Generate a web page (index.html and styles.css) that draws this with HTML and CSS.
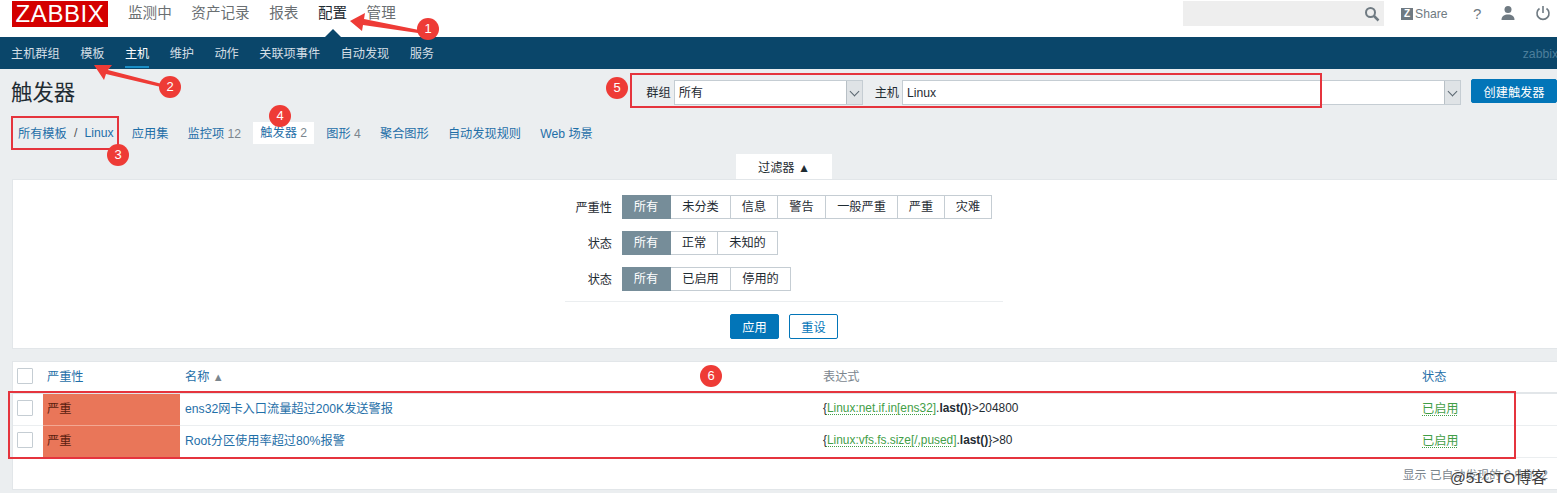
FILE: index.html
```html
<!DOCTYPE html>
<html lang="zh">
<head>
    <meta charset="UTF-8">
    <meta name="viewport" content="width=device-width, initial-scale=1.0">
    <title>触发器</title>
    <link rel="stylesheet" href="styles.css">
</head>
<body>

    <!-- 顶部菜单 -->
    <header class="top-bar">
        <div class="logo">ZABBIX</div>
        <nav class="top-menu">
            <a>监测中</a>
            <a>资产记录</a>
            <a>报表</a>
            <a class="active">配置</a>
            <a>管理</a>
        </nav>
        <div class="top-tools">
            <div class="search">
                <svg width="16" height="16" viewBox="0 0 16 16"><circle cx="6.5" cy="6.5" r="4.5" fill="none" stroke="#6f7a82" stroke-width="2"/><path d="M10 10l4.500 4.500" stroke="#6f7a82" stroke-width="2.500"/></svg>
            </div>
            <div class="share"><span class="share-z">Z</span>Share</div>
            <span class="help">?</span>
            <svg class="user" width="16" height="16" viewBox="0 0 16 16"><circle cx="8" cy="4.500" r="3.500" fill="#6f7a82"/><path d="M1.500 15c0-4 3-5.500 6.500-5.500s6.500 1.500 6.500 5.500z" fill="#6f7a82"/></svg>
            <svg class="power" width="16" height="16" viewBox="0 0 16 16"><path d="M4.500 3.500a6 6 0 1 0 7 0" fill="none" stroke="#6f7a82" stroke-width="1.600"/><path d="M8 1v7" stroke="#6f7a82" stroke-width="1.600"/></svg>
        </div>
    </header>

    <nav class="sub-nav">
        <a>主机群组</a>
        <a>模板</a>
        <a class="active">主机</a>
        <a>维护</a>
        <a>动作</a>
        <a>关联项事件</a>
        <a>自动发现</a>
        <a>服务</a>
        <span class="sub-user">zabbix</span>
    </nav>

    <main class="content">
        <div class="page-head">
            <h1>触发器</h1>
            <div class="head-controls">
                <label>群组</label>
                <div class="select group-select"><span>所有</span><i class="select-arrow"></i></div>
                <label>主机</label>
                <div class="select host-select"><span>Linux</span><i class="select-arrow"></i></div>
                <button class="btn-primary create-btn">创建触发器</button>
            </div>
        </div>

        <div class="breadcrumbs">
            <a class="crumb-first">所有模板</a><span class="crumb-sep">/</span><a class="crumb-host">Linux</a>
            <a>应用集</a>
            <a>监控项 <em>12</em></a>
            <a class="current">触发器 <em>2</em></a>
            <a>图形 <em>4</em></a>
            <a>聚合图形</a>
            <a>自动发现规则</a>
            <a>Web 场景</a>
        </div>

        <div class="filter-tab-row"><div class="filter-tab">过滤器 ▲</div></div>

        <section class="filter-box">
            <div class="filter-form">
                <div class="filter-row">
                    <label>严重性</label>
                    <div class="radio-group">
                        <span class="on w49">所有</span><span class="w60">未分类</span><span class="w47">信息</span><span class="w48">警告</span><span class="w72">一般严重</span><span class="w47">严重</span><span class="w47">灾难</span>
                    </div>
                </div>
                <div class="filter-row">
                    <label>状态</label>
                    <div class="radio-group">
                        <span class="on w49">所有</span><span class="w47">正常</span><span class="w60">未知的</span>
                    </div>
                </div>
                <div class="filter-row">
                    <label>状态</label>
                    <div class="radio-group">
                        <span class="on w49">所有</span><span class="w60">已启用</span><span class="w60">停用的</span>
                    </div>
                </div>
                <div class="filter-actions">
                    <button class="btn-primary">应用</button>
                    <button class="btn-outline">重设</button>
                </div>
            </div>
        </section>

        <section class="list-box">
            <table class="trigger-table">
                <colgroup>
                    <col class="col-check"><col class="col-severity"><col class="col-name"><col class="col-expr"><col>
                </colgroup>
                <thead>
                    <tr>
                        <th><i class="check"></i></th>
                        <th class="link">严重性</th>
                        <th class="link">名称 <b class="sort">▲</b></th>
                        <th class="expr">表达式</th>
                        <th class="link">状态</th>
                    </tr>
                </thead>
                <tbody>
                    <tr>
                        <td><i class="check"></i></td>
                        <td class="sev-high">严重</td>
                        <td class="link">ens32网卡入口流量超过200K发送警报</td>
                        <td class="expr">{<u>Linux:net.if.in[ens32]</u>.<strong>last()</strong>}&gt;204800</td>
                        <td class="status"><u>已启用</u></td>
                    </tr>
                    <tr>
                        <td><i class="check"></i></td>
                        <td class="sev-high">严重</td>
                        <td class="link">Root分区使用率超过80%报警</td>
                        <td class="expr">{<u>Linux:vfs.fs.size[/,pused]</u>.<strong>last()</strong>}&gt;80</td>
                        <td class="status"><u>已启用</u></td>
                    </tr>
                </tbody>
            </table>
            <div class="list-foot">显示 已自动发现的 2 中的 2</div>
        </section>
    </main>

    <!-- 截图上的标注 -->
    <div class="mark-box box-crumbs"></div>
    <div class="mark-box box-controls"></div>
    <div class="mark-box box-rows"></div>
    <svg class="arrows" width="1557" height="493" viewBox="0 0 1557 493">
        <path d="M350 21l15-8-1 6 55 11-1 3-55-8-1 6z" fill="#ee3b36"/>
        <path d="M94 65l18 0-4 5 54 14-1 3-55-13-2 6z" fill="#ee3b36"/>
    </svg>
    <span class="mark-num n1">1</span>
    <span class="mark-num n2">2</span>
    <span class="mark-num n3">3</span>
    <span class="mark-num n4">4</span>
    <span class="mark-num n5">5</span>
    <span class="mark-num n6">6</span>
    <div class="watermark">@51CTO博客</div>

</body>
</html>
```

FILE: styles.css
```css
* {
    box-sizing: border-box;
}

html, body {
    height: 493px;
    overflow: hidden;
}

body {
    margin: 0;
    position: relative;
    background: #ebeef0;
    font-family: "Liberation Sans", "Noto Sans CJK SC", sans-serif;
    font-size: 12.2px;
    color: #1f2c33;
}

a {
    color: #1f6fa8;
}

/* 顶部菜单 */
.top-bar {
    height: 37px;
    background: #fff;
    display: flex;
    padding: 1px 0 0 12px;
}

.logo {
    width: 96px;
    height: 26px;
    background: #d40000;
    color: #fff;
    font-size: 24px;
    line-height: 26px;
    text-align: center;
    letter-spacing: 0.6px;
}

.top-menu {
    display: flex;
    gap: 19.500px;
    margin-left: 20px;
    font-size: 14.600px;
    line-height: 25px;
}

.top-menu a {
    color: #6a6f72;
}

.top-menu a.active {
    color: #1f2c33;
    position: relative;
    height: 36px;
}

.top-menu a.active::after {
    content: "";
    position: absolute;
    left: 7px;
    bottom: 0;
    border: 8px solid transparent;
    border-top: 0;
    border-bottom-color: #0a466a;
}

.top-tools {
    margin-left: auto;
    display: flex;
    align-items: flex-start;
    color: #6f7a82;
}

.search {
    width: 201px;
    height: 25px;
    background: #eee;
    display: flex;
    align-items: center;
    justify-content: flex-end;
    padding-right: 4px;
}

.share {
    width: 72px;
    margin-left: 17px;
    display: flex;
    align-items: center;
    height: 25px;
    gap: 2px;
}

.share-z {
    width: 12px;
    height: 12px;
    background: #6f7a82;
    color: #fff;
    font-size: 10px;
    font-weight: bold;
    line-height: 12px;
    text-align: center;
}

.help {
    width: 27px;
    font-size: 15px;
    line-height: 25px;
}

.user {
    margin: 4px 19px 0 0;
}

.power {
    margin: 4px 6px 0 0;
}

/* 二级菜单 */
.sub-nav {
    height: 32px;
    background: #0a466a;
    display: flex;
    gap: 20.400px;
    padding: 0 0 0 11px;
    line-height: 34px;
}

.sub-nav a {
    color: #d4dee5;
}

.sub-nav a.active {
    color: #fff;
    height: 31px;
    border-bottom: 2px solid #1a8fc7;
}

.sub-user {
    margin-left: auto;
    color: #4d7f9c;
    margin-right: -1px;
}

/* 标题行 */
.page-head {
    height: 46px;
    display: flex;
    justify-content: space-between;
    padding-left: 11px;
}

h1 {
    margin: 7px 0 0;
    font-size: 21.400px;
    font-weight: normal;
    line-height: 34px;
}

.head-controls {
    display: flex;
    align-items: flex-start;
    padding-top: 11px;
    line-height: 24px;
}

.head-controls label {
    line-height: 26px;
}

.select {
    height: 25px;
    background: #fff;
    border: 1px solid #c5cdd3;
    display: flex;
    justify-content: space-between;
    padding-left: 4px;
    margin-left: 3px;
}

.group-select {
    width: 189px;
    margin-right: 12px;
}

.host-select {
    width: 559px;
    margin-right: 10px;
}

.select-arrow {
    width: 16px;
    background: #dfe3e6;
    border-left: 1px solid #b8c0c6;
    position: relative;
}

.select-arrow::after {
    content: "";
    position: absolute;
    left: 4px;
    top: 7px;
    width: 6px;
    height: 6px;
    border: solid #5a6670;
    border-width: 0 1px 1px 0;
    transform: rotate(45deg);
}

button {
    font: inherit;
    border-radius: 2px;
    cursor: pointer;
}

.btn-primary {
    background: #0275b8;
    color: #fff;
    border: 1px solid #0275b8;
}

.btn-outline {
    background: #fff;
    color: #0275b8;
    border: 1px solid #0275b8;
}

.create-btn {
    width: 86px;
    height: 24px;
    margin-top: -1px;
}

/* 二级页签 */
.breadcrumbs {
    height: 35px;
    display: flex;
    align-items: center;
    gap: 19.200px;
    padding: 0 0 0 18px;
}

.breadcrumbs em {
    font-style: normal;
    color: #7b868e;
}

.breadcrumbs .current {
    background: #fff;
    height: 22px;
    line-height: 22px;
    padding: 0 7px;
    margin: 0 -7px;
}

.crumb-first {
    margin-right: -12px;
}

.crumb-sep {
    color: #555;
    margin-right: -12px;
}

.crumb-host {
    margin-right: -1px;
}

.filter-tab-row {
    display: flex;
    justify-content: center;
    height: 25px;
    margin-top: 4px;
    padding-left: 11px;
}

.filter-tab {
    width: 96px;
    height: 25px;
    background: #fff;
    text-align: center;
    line-height: 28px;
}

/* 过滤器 */
.filter-box {
    height: 170px;
    margin-left: 12px;
    padding-right: 2px;
    background: #fff;
    border: 1px solid #e2e6e9;
    border-right: 0;
}

.filter-form {
    width: 438px;
    margin: 15px auto 0;
    display: flex;
    flex-direction: column;
    gap: 12px;
}

.filter-row {
    display: flex;
    align-items: center;
    gap: 10px;
    height: 24px;
}

.filter-row label {
    width: 47px;
    text-align: right;
}

.radio-group {
    display: flex;
}

.radio-group span {
    height: 24px;
    line-height: 23px;
    text-align: center;
    background: #fff;
    border: 1px solid #c5cdd3;
    border-left: 0;
}

.radio-group span.on {
    background: #768d99;
    color: #fff;
    border-color: #768d99;
}

.w47 { width: 47px; }
.w48 { width: 48px; }
.w49 { width: 49px; }
.w60 { width: 60px; }
.w72 { width: 72px; }

.filter-actions {
    border-top: 1px solid #ebeef0;
    padding-top: 12px;
    margin-top: -2px;
    display: flex;
    justify-content: center;
    gap: 10px;
}

.filter-actions button {
    width: 49px;
    height: 25px;
}

/* 列表 */
.list-box {
    height: 129px;
    margin: 12px 0 0 12px;
    background: #fff;
    border: 1px solid #e2e6e9;
    border-right: 0;
}

.trigger-table {
    width: 100%;
    border-collapse: collapse;
    table-layout: fixed;
}

.col-check { width: 30px; }
.col-severity { width: 137px; }
.col-name { width: 637px; }
.col-expr { width: 600px; }

.trigger-table th {
    height: 31px;
    font-weight: normal;
    text-align: left;
    color: #7b868e;
    padding: 0 0 2px 4px;
    border-bottom: 2px solid #e2e6e9;
}

.trigger-table td {
    height: 32px;
    padding: 0 0 2px 4px;
    border-bottom: 1px solid #ebeef0;
}

.trigger-table .link {
    color: #1f6fa8;
    padding-left: 5px;
}

.trigger-table th.link:nth-child(2) {
    padding-left: 4px;
}

.trigger-table .expr {
    padding-left: 6px;
}

.trigger-table td.expr {
    font-size: 11.900px;
}

.trigger-table .status {
    padding-left: 5px;
}

.trigger-table td u {
    color: #429e47;
    text-decoration: underline dotted;
    text-underline-offset: 2px;
}

.check {
    display: block;
    width: 16px;
    height: 16px;
    background: #fff;
    border: 1px solid #c5cdd3;
    border-radius: 1px;
}

.sort {
    font-size: 11px;
    font-weight: normal;
    color: #7b868e;
}

.trigger-table .sev-high {
    background: #e97659;
    color: #5a2010;
    padding-left: 4px;
    border-bottom: 1px solid #f3a893;
}

.list-foot {
    text-align: right;
    font-size: 11.900px;
    color: #7b868e;
    padding: 7px 9px 0 0;
}

/* 截图标注 */
.mark-box {
    position: absolute;
    border: 2px solid #e5343d;
}

.box-crumbs { left: 11px; top: 116px; width: 108px; height: 34px; }
.box-controls { left: 630px; top: 73px; width: 692px; height: 35px; }
.box-rows { left: 8px; top: 391px; width: 1508px; height: 68px; }

.arrows {
    position: absolute;
    left: 0;
    top: 0;
}

.mark-num {
    position: absolute;
    width: 22px;
    height: 22px;
    border-radius: 50%;
    background: #ee3b36;
    color: #fff;
    font-size: 13px;
    line-height: 22px;
    text-align: center;
}

.n1 { left: 417px; top: 18px; }
.n2 { left: 159px; top: 76px; }
.n3 { left: 107px; top: 144px; }
.n4 { left: 269px; top: 105px; }
.n5 { left: 606px; top: 77px; }
.n6 { left: 700px; top: 365px; }

.watermark {
    position: absolute;
    left: 1450px;
    top: 465px;
    font-size: 15.500px;
    color: #3d3d3d;
    text-shadow: 0 0 2px #fff;
}
```
